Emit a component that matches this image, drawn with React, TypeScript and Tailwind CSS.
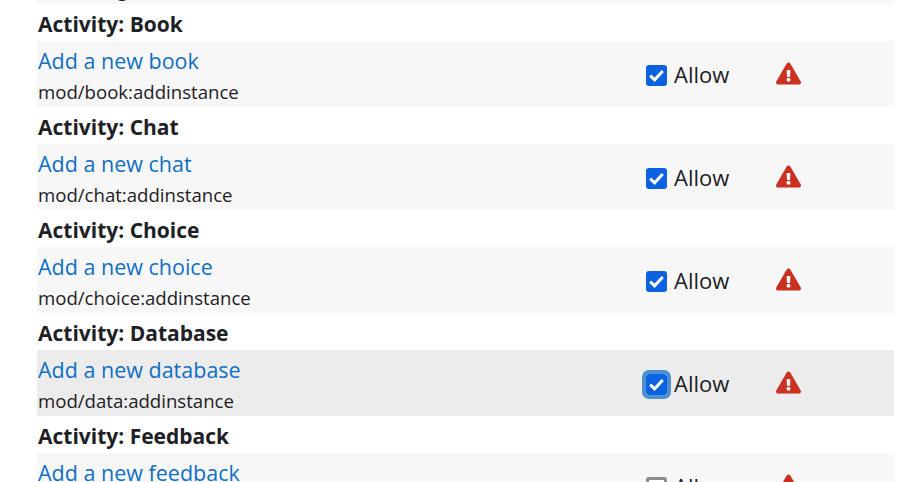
import { FaExclamationTriangle } from "react-icons/fa";

type Item = { title: string; link: string; cap: string; hover?: boolean; off?: boolean };
const items: Item[] = [
  { title: "Book", link: "Add a new book", cap: "mod/book:addinstance" },
  { title: "Chat", link: "Add a new chat", cap: "mod/chat:addinstance" },
  { title: "Choice", link: "Add a new choice", cap: "mod/choice:addinstance" },
  { title: "Database", link: "Add a new database", cap: "mod/data:addinstance", hover: true },
  { title: "Feedback", link: "Add a new feedback", cap: "mod/feedback:addinstance", off: true },
];

function Box({ hover, off }: { hover?: boolean; off?: boolean }) {
  if (off) {
    return <div className="w-[21px] h-[21px] shrink-0 rounded-[3px] border-[3px] border-[#8c8c93] bg-white" />;
  }
  return (
    <div
      className={`w-[21px] h-[21px] shrink-0 rounded-[3px] bg-[#0b62e0] flex items-center justify-center ${
        hover ? "outline-4 outline-[#4a90d0]" : ""
      }`}
    >
      <svg width="15" height="13" viewBox="0 0 15 13" fill="none">
        <path d="M1.2 6.6 L5.6 10.8 L13.8 2" stroke="white" strokeWidth="3" />
      </svg>
    </div>
  );
}

function Row({ item }: { item: Item }) {
  return (
    <div>
      <div className="h-[37px] flex items-center pl-px pt-[3px] text-[21px] leading-[37px] font-bold text-[#1d2125]">
        Activity: {item.title}
      </div>
      <div className={`h-[66px] flex ${item.hover ? "bg-[#ececec]" : "bg-[#f7f7f7]"}`}>
        <div className="w-[609px] pl-px pt-[3px]">
          <div className="text-[21.5px] leading-[33px] text-[#0f6fc5]">{item.link}</div>
          <div className="mt-[1px] text-[18.6px] leading-[27px] text-[#1d2125]">{item.cap}</div>
        </div>
        <div className="w-[130px] flex items-center">
          <div className="pt-[3px]">
            <Box hover={item.hover} off={item.off} />
          </div>
          <span className="ml-[7px] text-[22px] text-[#1d2125]">Allow</span>
        </div>
        <div className="flex items-center pb-[2px]">
          <FaExclamationTriangle className="text-[#ca3120] w-[25px] h-[25px]" />
        </div>
      </div>
    </div>
  );
}

export default function App() {
  return (
    <div className="w-[908px] h-[482px] overflow-hidden bg-white font-['Open_Sans','Noto_Sans',sans-serif]">
      <div className="ml-[37px] w-[857px]">
        <div className="h-1 bg-[#f7f7f7] overflow-hidden pl-px">
          <div className="mt-[-24px] text-[18.6px] leading-[27px] text-[#1d2125]">mod/assign:addinstance</div>
        </div>
        {items.map((i) => (
          <Row key={i.title} item={i} />
        ))}
      </div>
    </div>
  );
}
